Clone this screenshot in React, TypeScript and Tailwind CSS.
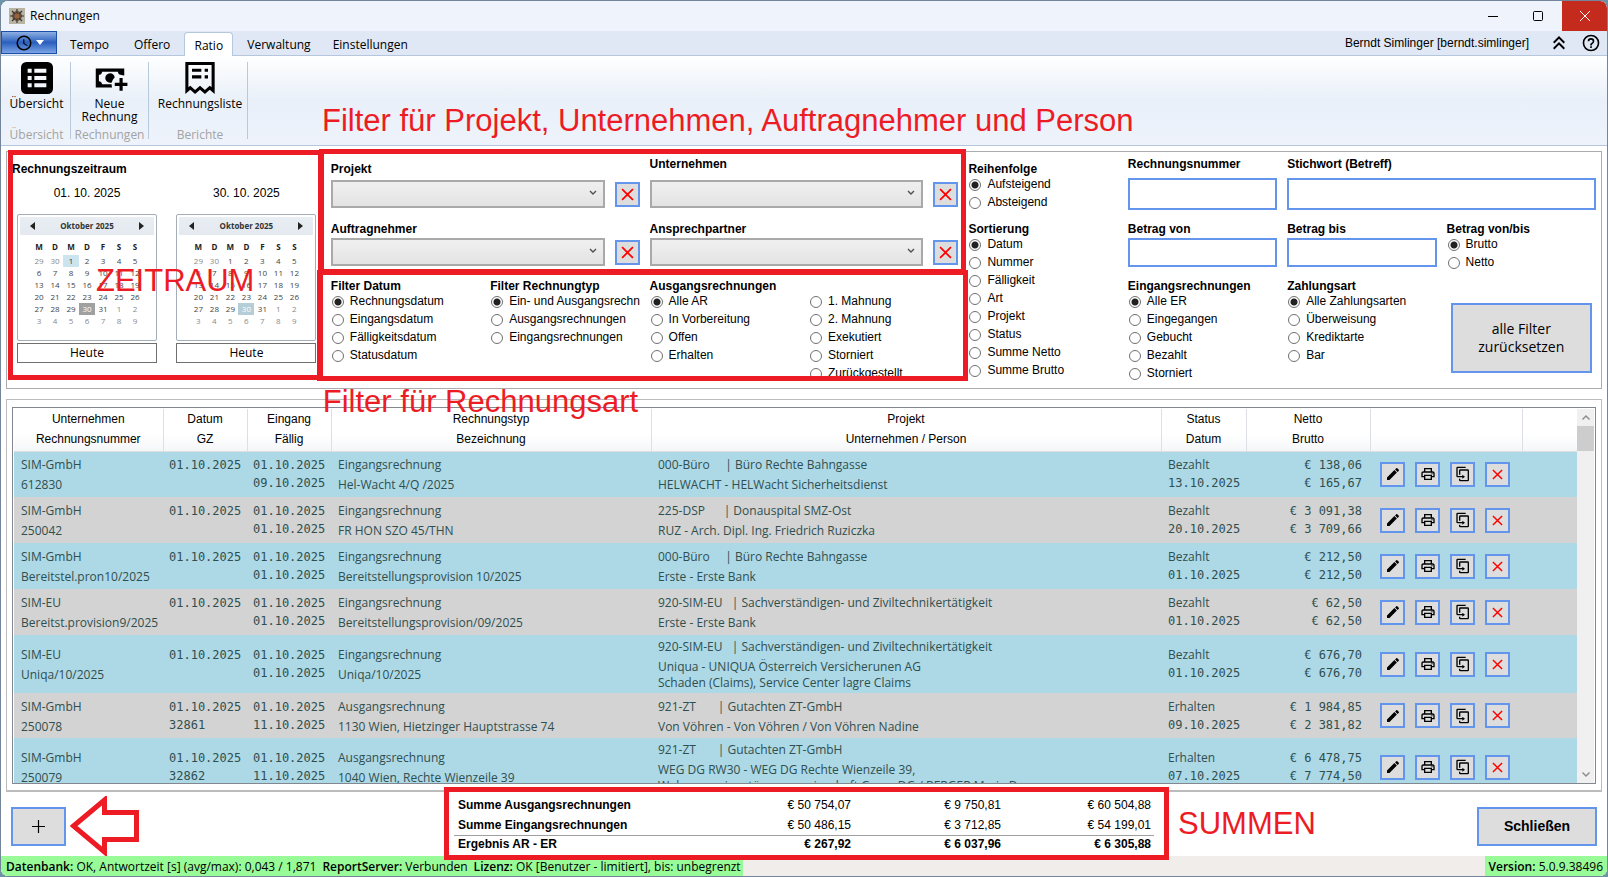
import { useId } from "react";
import type { ReactNode } from "react";

const icons = {
  clock:
    "M12 20A8 8 0 0 0 20 12A8 8 0 0 0 12 4A8 8 0 0 0 4 12A8 8 0 0 0 12 20M12 2A10 10 0 0 1 22 12A10 10 0 0 1 12 22C6.47 22 2 17.5 2 12A10 10 0 0 1 12 2M12.5 7V12.25L17 14.92L16.25 16.15L11 13V7H12.5Z",
  chevronsUp:
    "M7.41,18.41L6,17L12,11L18,17L16.59,18.41L12,13.83L7.41,18.41M7.41,12.41L6,11L12,5L18,11L16.59,12.41L12,7.83L7.41,12.41Z",
  help: "M11,18H13V16H11V18M12,2A10,10 0 0,0 2,12A10,10 0 0,0 12,22A10,10 0 0,0 22,12A10,10 0 0,0 12,2M12,20C7.59,20 4,16.41 4,12C4,7.59 7.59,4 12,4C16.41,4 20,7.59 20,12C20,16.41 16.41,20 12,20M12,6A4,4 0 0,0 8,10H10A2,2 0 0,1 12,8A2,2 0 0,1 14,10C14,12 11,11.75 11,15H13C13,12.75 16,12.5 16,10A4,4 0 0,0 12,6Z",
  list: "M4 0H20A4 4 0 0 1 24 4V20A4 4 0 0 1 20 24H4A4 4 0 0 1 0 20V4A4 4 0 0 1 4 0M5 5V8H8V5H5M10 5V8H19V5H10M5 10.5V13.5H8V10.5H5M10 10.5V13.5H19V10.5H10M5 16V19H8V16H5M10 16V19H19V16H10Z",
  cashPlus:
    "M15 15V17H18V20H20V17H23V15H20V12H18V15M14.97 11.61C14.85 10.28 13.59 8.97 12 9C10.3 9.03 9 10.3 9 12C9 13.7 10.3 14.94 12 15C12.38 15 12.77 14.92 13.14 14.77C13.41 13.67 13.86 12.63 14.97 11.61M13 16H7C7 14.9 6.1 14 5 14V10C6.1 10 7 9.1 7 8H17C17 9.1 17.9 10 19 10V10.06C19.67 10.06 20.34 10.18 21 10.4V6H3V18H13.32C13.1 17.33 13 16.66 13 16Z",
  receipt:
    "M1 0H23V24L19.3 20.8L15.7 24L12 20.8L8.3 24L4.7 20.8L1 24V0M3.3 2.3V19L4.7 17.8L8.3 21L12 17.8L15.7 21L19.3 17.8L20.7 19V2.3H3.3M6 5H13V7.3H6V5M15.5 5H18V7.3H15.5V5M6 10H13V12.3H6V10M15.5 10H18V12.3H15.5V10Z",
  pencil:
    "M20.71,7.04C21.1,6.65 21.1,6 20.71,5.63L18.37,3.29C18,2.9 17.35,2.9 16.96,3.29L15.12,5.12L18.87,8.87M3,17.25V21H6.75L17.81,9.93L14.06,6.18L3,17.25Z",
  printer:
    "M19 8C20.66 8 22 9.34 22 11V17H18V21H6V17H2V11C2 9.34 3.34 8 5 8H6V3H18V8H19M8 5V8H16V5H8M16 19V15H8V19H16M18 15H20V11C20 10.45 19.55 10 19 10H5C4.45 10 4 10.45 4 11V15H6V13H18V15M19 11.5C19 12.05 18.55 12.5 18 12.5C17.45 12.5 17 12.05 17 11.5C17 10.95 17.45 10.5 18 10.5C18.55 10.5 19 10.95 19 11.5Z",
  duplicate:
    "M11,17H4A2,2 0 0,1 2,15V3A2,2 0 0,1 4,1H16V3H4V15H11V13L15,16L11,19V17M19,21V7H8V13H6V7A2,2 0 0,1 8,5H19A2,2 0 0,1 21,7V21A2,2 0 0,1 19,23H8A2,2 0 0,1 6,21V19H8V21H19Z",
};

function Icon({ name, className }: { name: keyof typeof icons; className: string }) {
  return (
    <svg viewBox="0 0 24 24" className={className} fill="currentColor" fillRule="evenodd" aria-hidden="true">
      <path d={icons[name]} />
    </svg>
  );
}

function Cross({ className }: { className: string }) {
  return (
    <svg viewBox="0 0 12 12" className={className} fill="none" stroke="currentColor" aria-hidden="true">
      <path d="M1 1L11 11M11 1L1 11" strokeWidth="1.6" />
    </svg>
  );
}

function IconButton({ label, children }: { label: string; children: ReactNode }) {
  return (
    <button
      type="button"
      aria-label={label}
      className="flex h-[25px] w-[25px] shrink-0 items-center justify-center border-2 border-[#6495ed] bg-[#dddddd] text-black"
    >
      {children}
    </button>
  );
}

function RadioList({ title, options, selected = 0 }: { title?: string; options: string[]; selected?: number }) {
  const name = useId();
  return (
    <fieldset className="min-w-0 overflow-hidden whitespace-nowrap">
      <legend className="h-4 font-bold leading-[18px]">{title}</legend>
      {options.map((option, i) => (
        <label key={option} className="flex h-[18px] items-center gap-[6px]">
          <input
            type="radio"
            name={name}
            defaultChecked={i === selected}
            className="ml-px h-3 w-3 shrink-0 appearance-none rounded-full border border-[#707070] bg-white checked:bg-[radial-gradient(circle,#212121_0_3px,transparent_4px)]"
          />
          <span className="pb-[2px] leading-4">{option}</span>
        </label>
      ))}
    </fieldset>
  );
}

function ComboField({ label, rowClass }: { label: string; rowClass: string }) {
  const id = useId();
  return (
    <>
      <label htmlFor={id} className="block h-4 font-bold leading-[18px]">
        {label}
      </label>
      <div className={`flex items-center gap-[10px] ${rowClass}`}>
        <div className="relative min-w-0 flex-1">
          <select
            id={id}
            className="block h-7 w-full appearance-none border-2 border-[#a9a9a9] bg-linear-to-b from-[#f0f0f0] to-[#e3e3e3]"
          >
            <option value=""></option>
          </select>
          <svg viewBox="0 0 8 6" className="pointer-events-none absolute top-[10px] right-2 h-[6px] w-2" fill="none" stroke="#505050" aria-hidden="true">
            <path d="M1 1L4 4L7 1" strokeWidth="1.4" />
          </svg>
        </div>
        <IconButton label={`${label} löschen`}>
          <Cross className="h-[13px] w-[13px] text-[#ff0000]" />
        </IconButton>
      </div>
    </>
  );
}

function TextField({ label, className, inputClass }: { label: string; className: string; inputClass: string }) {
  const id = useId();
  return (
    <div className={className}>
      <label htmlFor={id} className="block h-4 font-bold leading-[18px]">
        {label}
      </label>
      <input id={id} type="text" className={`block w-full border-2 border-[#6495ed] bg-white px-1 ${inputClass}`} />
    </div>
  );
}

const weekdays = ["M", "D", "M", "D", "F", "S", "S"];
const weeks = [
  [29, 30, 1, 2, 3, 4, 5],
  [6, 7, 8, 9, 10, 11, 12],
  [13, 14, 15, 16, 17, 18, 19],
  [20, 21, 22, 23, 24, 25, 26],
  [27, 28, 29, 30, 31, 1, 2],
  [3, 4, 5, 6, 7, 8, 9],
];

function dayClass(week: number, day: number, from: boolean) {
  if (from && week === 0 && day === 1) return "bg-[#cbe4ee] text-[#333333]";
  if (week === 4 && day === 30) return from ? "bg-[#a0a0a0] text-white" : "bg-[#b4cdd6] text-white";
  if ((week === 0 && day > 20) || (week > 3 && day < 20)) return "text-[#8a8a8a]";
  return "text-[#444444]";
}

function Calendar({ date, from = false }: { date: string; from?: boolean }) {
  return (
    <div className="ml-[5px] w-[140px]">
      <p className="text-center leading-4">{date}</p>
      <div className="mt-[13px] h-[127px] rounded-xs border border-[#a3aeb9] p-[2px] font-['Open_Sans','Noto_Sans',sans-serif] text-[8px] leading-3">
        <div className="flex h-[18px] items-center justify-between bg-linear-to-b from-[#e9eef3] to-[#e3e9ef] px-[10px]">
          <button type="button" aria-label="Vorheriger Monat">
            <svg viewBox="0 0 5 8" className="h-2 w-[5px]" fill="#222222">
              <path d="M5 0V8L0 4Z" />
            </svg>
          </button>
          <span className="font-bold text-[#333333]">Oktober 2025</span>
          <button type="button" aria-label="Nächster Monat">
            <svg viewBox="0 0 5 8" className="h-2 w-[5px]" fill="#222222">
              <path d="M0 0V8L5 4Z" />
            </svg>
          </button>
        </div>
        <table className="mx-auto mt-[6px] table-fixed text-center">
          <thead>
            <tr>
              {weekdays.map((day, i) => (
                <th key={i} className="h-[14px] w-4 pb-[2px] font-bold text-[#222222]">
                  {day}
                </th>
              ))}
            </tr>
          </thead>
          <tbody>
            {weeks.map((week, w) => (
              <tr key={w}>
                {week.map((day) => (
                  <td key={day} className={`h-3 p-0 ${dayClass(w, day, from)}`}>
                    {day}
                  </td>
                ))}
              </tr>
            ))}
          </tbody>
        </table>
      </div>
      <button
        type="button"
        className="mt-[2px] block h-5 w-full border border-[#707070] bg-white font-['Open_Sans','Noto_Sans',sans-serif] leading-4"
      >
        Heute
      </button>
    </div>
  );
}

function RibbonGroup({ title, label, icon, className }: { title: string; label: string; icon: ReactNode; className: string }) {
  return (
    <div className={`my-[6px] flex flex-col items-center justify-between border-r border-[#b8c9dc] ${className}`}>
      <button type="button" className="flex flex-col items-center text-center leading-[13px]">
        <span className="flex h-8 items-center justify-center">{icon}</span>
        <span className="mt-[3px]">{label}</span>
      </button>
      <span className="leading-2 text-[#a3a3a3]">{title}</span>
    </div>
  );
}

const tabClass = "flex h-6 items-center pt-1";

const rows = [
  { company: "SIM-GmbH", number: "612830", date: "01.10.2025", gz: "", received: "01.10.2025", due: "09.10.2025", type: "Eingangsrechnung", subject: "Hel-Wacht 4/Q /2025", project: "000-Büro     | Büro Rechte Bahngasse", partner: "HELWACHT - HELWacht Sicherheitsdienst", status: "Bezahlt", statusDate: "13.10.2025", net: "€ 138,06", gross: "€ 165,67", height: "h-[46px]" },
  { company: "SIM-GmbH", number: "250042", date: "01.10.2025", gz: "", received: "01.10.2025", due: "01.10.2025", type: "Eingangsrechnung", subject: "FR HON SZO 45/THN", project: "225-DSP      | Donauspital SMZ-Ost", partner: "RUZ - Arch. Dipl. Ing. Friedrich Ruziczka", status: "Bezahlt", statusDate: "20.10.2025", net: "€ 3 091,38", gross: "€ 3 709,66", height: "h-[46px]" },
  { company: "SIM-GmbH", number: "Bereitstel.pron10/2025", date: "01.10.2025", gz: "", received: "01.10.2025", due: "01.10.2025", type: "Eingangsrechnung", subject: "Bereitstellungsprovision 10/2025", project: "000-Büro     | Büro Rechte Bahngasse", partner: "Erste - Erste Bank", status: "Bezahlt", statusDate: "01.10.2025", net: "€ 212,50", gross: "€ 212,50", height: "h-[46px]" },
  { company: "SIM-EU", number: "Bereitst.provision9/2025", date: "01.10.2025", gz: "", received: "01.10.2025", due: "01.10.2025", type: "Eingangsrechnung", subject: "Bereitstellungsprovision/09/2025", project: "920-SIM-EU   | Sachverständigen- und Ziviltechnikertätigkeit", partner: "Erste - Erste Bank", status: "Bezahlt", statusDate: "01.10.2025", net: "€ 62,50", gross: "€ 62,50", height: "h-[46px]" },
  { company: "SIM-EU", number: "Uniqa/10/2025", date: "01.10.2025", gz: "", received: "01.10.2025", due: "01.10.2025", type: "Eingangsrechnung", subject: "Uniqa/10/2025", project: "920-SIM-EU   | Sachverständigen- und Ziviltechnikertätigkeit", partner: "Uniqua - UNIQUA Österreich Versicherunen AG\nSchaden (Claims), Service Center lagre Claims", status: "Bezahlt", statusDate: "01.10.2025", net: "€ 676,70", gross: "€ 676,70", height: "h-[58px]" },
  { company: "SIM-GmbH", number: "250078", date: "01.10.2025", gz: "32861", received: "01.10.2025", due: "11.10.2025", type: "Ausgangsrechnung", subject: "1130 Wien, Hietzinger Hauptstrasse 74", project: "921-ZT       | Gutachten ZT-GmbH", partner: "Von Vöhren - Von Vöhren / Von Vöhren Nadine", status: "Erhalten", statusDate: "09.10.2025", net: "€ 1 984,85", gross: "€ 2 381,82", height: "h-[45px]" },
  { company: "SIM-GmbH", number: "250079", date: "01.10.2025", gz: "32862", received: "01.10.2025", due: "11.10.2025", type: "Ausgangsrechnung", subject: "1040 Wien, Rechte Wienzeile 39", project: "921-ZT       | Gutachten ZT-GmbH", partner: "WEG DG RW30 - WEG DG Rechte Wienzeile 39,\nWohnungseigentümergemeinschaft Gasse DG / BERGER Maria D", status: "Erhalten", statusDate: "07.10.2025", net: "€ 6 478,75", gross: "€ 7 774,50", height: "h-[58px]" },
];

const columns = [
  ["Unternehmen", "Rechnungsnummer", "w-[149px]"],
  ["Datum", "GZ", "w-[84px]"],
  ["Eingang", "Fällig", "w-[84px]"],
  ["Rechnungstyp", "Bezeichnung", "w-[320px]"],
  ["Projekt", "Unternehmen / Person", ""],
  ["Status", "Datum", "w-[85px]"],
  ["Netto", "Brutto", "w-[124px]"],
  ["", "", "w-[152px]"],
  ["", "", "w-[55px]"],
];

function TextCell({ first, second }: { first: string; second: string }) {
  return (
    <td className="overflow-hidden py-0 pr-0 pl-[7px] align-middle font-['Open_Sans','Noto_Sans',sans-serif] font-medium whitespace-pre">
      <div className="leading-5">{first}</div>
      <div className="pt-[2px] leading-4">{second}</div>
    </td>
  );
}

const monoClass = "p-0 align-middle font-['DejaVu_Sans_Mono',monospace] leading-[18px]";

function InvoiceTable() {
  return (
    <table className="w-full table-fixed text-[12px]">
      <thead>
        <tr>
          {columns.map(([top, bottom, width], i) => (
            <th
              key={i}
              className={`h-[42px] border-r border-b border-[#dcdfe3] bg-linear-to-b from-white from-60% to-[#f5f6f8] p-0 align-top font-normal leading-5 last:border-r-0 ${width}`}
            >
              {top}
              <br />
              {bottom}
            </th>
          ))}
        </tr>
      </thead>
      <tbody className="text-[#2f4f4f]">
        {rows.map((row, i) => (
          <tr key={row.number} className={`${row.height} ${i % 2 ? "bg-[#d3d3d3]" : "bg-[#add8e6]"}`}>
            <TextCell first={row.company} second={row.number} />
            <td className={`${monoClass} pl-[6px]`}>
              {row.date}
              <br />
              {row.gz || "\u00a0"}
            </td>
            <td className={`${monoClass} pl-[6px]`}>
              {row.received}
              <br />
              {row.due}
            </td>
            <TextCell first={row.type} second={row.subject} />
            <TextCell first={row.project} second={row.partner} />
            <td className={`${monoClass} pl-[7px]`}>
              <span className="font-['Open_Sans','Noto_Sans',sans-serif] font-medium">{row.status}</span>
              <br />
              {row.statusDate}
            </td>
            <td className={`${monoClass} pr-2 text-right`}>
              {row.net}
              <br />
              {row.gross}
            </td>
            <td className="p-0 align-middle">
              <div className="flex gap-[10px] pl-[10px]">
                <IconButton label="Bearbeiten">
                  <Icon name="pencil" className="h-4 w-4" />
                </IconButton>
                <IconButton label="Drucken">
                  <Icon name="printer" className="h-4 w-4" />
                </IconButton>
                <IconButton label="Duplizieren">
                  <Icon name="duplicate" className="h-4 w-4" />
                </IconButton>
                <IconButton label="Löschen">
                  <Cross className="h-[11px] w-[11px] text-[#ff0000]" />
                </IconButton>
              </div>
            </td>
            <td></td>
          </tr>
        ))}
      </tbody>
    </table>
  );
}

// red marker text of the manual
const noteClass = "whitespace-nowrap text-[31px] leading-9 text-[#ed1c24]";

export default function App() {
  return (
    <div className="h-screen min-h-[700px] overflow-hidden bg-[#6d93a8] font-['Liberation_Sans',Arial,sans-serif] text-[12px] text-black">
      <div className="flex h-full flex-col overflow-hidden rounded-lg border border-[#74859b] bg-white">
        <header className="flex h-[30px] shrink-0 items-center bg-[#eff3fb] font-['Open_Sans','Noto_Sans',sans-serif]">
          <svg viewBox="0 0 16 16" className="ml-2 h-4 w-4" aria-hidden="true">
            <rect width="16" height="16" fill="#b9b3a4" />
            <circle cx="8" cy="8" r="5" fill="#6b5a48" />
            <path d="M8 1V15M1 8H15M3 3L13 13M13 3L3 13" stroke="#3c342c" strokeWidth="1.2" />
            <circle cx="8" cy="8" r="2.6" fill="#9a6238" />
          </svg>
          <h1 className="ml-[5px] flex-1">Rechnungen</h1>
          <button type="button" aria-label="Minimieren" className="flex h-full w-[45px] items-center justify-center">
            <svg viewBox="0 0 10 10" className="h-[10px] w-[10px]" stroke="#000000">
              <path d="M0 5.5H10" />
            </svg>
          </button>
          <button type="button" aria-label="Maximieren" className="mr-[2px] flex h-full w-[45px] items-center justify-center">
            <svg viewBox="0 0 10 10" className="h-[10px] w-[10px]" fill="none" stroke="#000000">
              <rect x="0.5" y="0.5" width="9" height="9" rx="1" />
            </svg>
          </button>
          <button type="button" aria-label="Fenster schließen" className="flex h-full w-[45px] items-center justify-center bg-[#c42b1c] text-white">
            <svg viewBox="0 0 10 10" className="h-[10px] w-[10px]" stroke="currentColor">
              <path d="M0 0L10 10M10 0L0 10" />
            </svg>
          </button>
        </header>

        <nav className="flex h-[25px] shrink-0 items-end border-b border-[#b5c7dc] bg-[#dfe8f4] font-['Open_Sans','Noto_Sans',sans-serif]">
          <button
            type="button"
            aria-label="Anwendungsmenü"
            className="flex h-[23px] w-14 items-center justify-center gap-[3px] self-start border border-[#1c4fa8] bg-linear-to-b from-[#8eb0e3] via-[#2a5fbd] via-50% to-[#7aa4e4]"
          >
            <Icon name="clock" className="h-[18px] w-[18px]" />
            <svg viewBox="0 0 8 5" className="h-[5px] w-2" fill="#ffffff">
              <path d="M0 0H8L4 5Z" />
            </svg>
          </button>
          <a href="#tempo" className={`${tabClass} ml-[13px]`}>Tempo</a>
          <a href="#offero" className={`${tabClass} ml-[25px]`}>Offero</a>
          <a href="#ratio" aria-current="page" className="ml-[14px] -mb-px flex h-6 w-[49px] items-center justify-center rounded-t-sm border border-b-0 border-[#b5c7dc] bg-white pt-[2px]">
            Ratio
          </a>
          <a href="#verwaltung" className={`${tabClass} ml-[14px]`}>Verwaltung</a>
          <a href="#einstellungen" className={`${tabClass} ml-[22px]`}>Einstellungen</a>
          <div className="ml-auto flex items-center self-stretch font-['Liberation_Sans',Arial,sans-serif]">
            <span>Berndt Simlinger [berndt.simlinger]</span>
            <button type="button" aria-label="Menüband einklappen" className="ml-[18px]">
              <Icon name="chevronsUp" className="h-6 w-6" />
            </button>
            <button type="button" aria-label="Hilfe" className="mr-[6px] ml-[10px]">
              <Icon name="help" className="h-5 w-5" />
            </button>
          </div>
        </nav>

        <section className="relative flex h-[90px] shrink-0 border-b border-[#b5c7dc] bg-linear-to-b from-white via-[#e9f0f9] via-50% to-[#eef3fb] font-['Open_Sans','Noto_Sans',sans-serif]">
          <RibbonGroup className="w-[70px] pl-[2px]" title="Übersicht" label="Übersicht" icon={<Icon name="list" className="h-8 w-8" />} />
          <RibbonGroup className="w-[78px] px-2" title="Rechnungen" label="Neue Rechnung" icon={<Icon name="cashPlus" className="h-[38px] w-[38px]" />} />
          <RibbonGroup className="w-[99px] pl-1" title="Berichte" label="Rechnungsliste" icon={<Icon name="receipt" className="h-8 w-8" />} />
          <p className="pointer-events-none absolute top-[47px] left-[321px] font-['Liberation_Sans',Arial,sans-serif]">
            <span className={noteClass}>Filter für Projekt, Unternehmen, Auftragnehmer und Person</span>
          </p>
        </section>

        <main className="flex min-h-0 flex-1 flex-col px-[5px] pt-[5px]">
          <section className="grid h-[238px] shrink-0 grid-cols-10 grid-rows-[68px_57px_111px] gap-x-[10px] border border-[#acacac] px-[5px]">
            <div className="relative col-span-2 row-span-3 pt-2">
              <h2 className="h-4 font-bold leading-[18px]">Rechnungszeitraum</h2>
              <div className="mt-[9px] grid grid-cols-2 gap-[10px]">
                <Calendar date="01. 10. 2025" from />
                <Calendar date="30. 10. 2025" />
              </div>
              <div className="pointer-events-none absolute -top-[2px] -right-[2px] bottom-2 -left-1 border-[5px] border-[#ed1c24]"></div>
              <p className={`pointer-events-none absolute top-[111px] left-[84px] ${noteClass}`}>ZEITRAUM</p>
            </div>

            <div className="col-span-2 col-start-3 row-start-1 pt-2">
              <ComboField label="Projekt" rowClass="mt-1" />
            </div>
            <div className="col-span-2 col-start-5 row-start-1 pt-[3px]">
              <ComboField label="Unternehmen" rowClass="mt-[9px]" />
            </div>
            <div className="col-span-2 col-start-3 row-start-2">
              <ComboField label="Auftragnehmer" rowClass="mt-[2px]" />
            </div>
            <div className="col-span-2 col-start-5 row-start-2">
              <ComboField label="Ansprechpartner" rowClass="mt-[2px]" />
            </div>
            <div className="pointer-events-none relative col-span-4 col-start-3 row-span-2 row-start-1">
              <div className="absolute -top-[3px] -right-2 bottom-[3px] -left-3 border-[5px] border-[#ed1c24]"></div>
            </div>

            <div className="col-start-3 row-start-3">
              <RadioList title="Filter Datum" options={["Rechnungsdatum", "Eingangsdatum", "Fälligkeitsdatum", "Statusdatum"]} />
            </div>
            <div className="col-start-4 row-start-3">
              <RadioList title="Filter Rechnungtyp" options={["Ein- und Ausgangsrechnungen", "Ausgangsrechnungen", "Eingangsrechnungen"]} />
            </div>
            <div className="col-start-5 row-start-3">
              <RadioList title="Ausgangsrechnungen" options={["Alle AR", "In Vorbereitung", "Offen", "Erhalten"]} />
            </div>
            <div className="col-start-6 row-start-3 h-[99px] overflow-hidden">
              <RadioList title={"\u00a0"} selected={-1} options={["1. Mahnung", "2. Mahnung", "Exekutiert", "Storniert", "Zurückgestellt"]} />
            </div>
            <div className="pointer-events-none relative z-10 col-span-4 col-start-3 row-start-3">
              <div className="absolute -top-[7px] -right-[10px] bottom-[7px] -left-[14px] border-[5px] border-[#ed1c24]"></div>
              <p className={`absolute top-[107px] -left-[8px] ${noteClass}`}>Filter für Rechnungsart</p>
            </div>

            <div className="col-start-7 row-start-1 pt-2">
              <RadioList title="Reihenfolge" options={["Aufsteigend", "Absteigend"]} />
            </div>
            <div className="col-start-7 row-span-2 row-start-2">
              <RadioList
                title="Sortierung"
                options={["Datum", "Nummer", "Fälligkeit", "Art", "Projekt", "Status", "Summe Netto", "Summe Brutto"]}
              />
            </div>

            <TextField label="Rechnungsnummer" className="col-start-8 row-start-1 pt-[3px]" inputClass="mt-[7px] h-8" />
            <TextField label="Stichwort (Betreff)" className="col-span-2 col-start-9 row-start-1 pt-[3px]" inputClass="mt-[7px] h-8" />
            <TextField label="Betrag von" className="col-start-8 row-start-2" inputClass="mt-[2px] h-[29px]" />
            <TextField label="Betrag bis" className="col-start-9 row-start-2" inputClass="mt-[2px] h-[29px]" />
            <div className="col-start-10 row-start-2">
              <RadioList title="Betrag von/bis" options={["Brutto", "Netto"]} />
            </div>
            <div className="col-start-8 row-start-3">
              <RadioList title="Eingangsrechnungen" options={["Alle ER", "Eingegangen", "Gebucht", "Bezahlt", "Storniert"]} />
            </div>
            <div className="col-start-9 row-start-3">
              <RadioList title="Zahlungsart" options={["Alle Zahlungsarten", "Überweisung", "Krediktarte", "Bar"]} />
            </div>
            <div className="col-start-10 row-start-3 px-1 pt-[26px]">
              <button
                type="button"
                className="h-[70px] w-full border-2 border-[#6495ed] bg-[#dddddd] px-4 font-['Open_Sans','Noto_Sans',sans-serif] text-[14px] leading-[18px]"
              >
                alle Filter zurücksetzen
              </button>
            </div>
          </section>

          <section className="mt-[10px] flex min-h-0 flex-1 border border-b-2 border-[#bcbcbc] px-[5px] pt-[7px] pb-[6px]">
            <div className="flex min-w-0 flex-1 overflow-hidden border border-[#828790] px-px pt-px">
              <div className="min-w-0 flex-1">
                <InvoiceTable />
              </div>
              <div className="flex w-[17px] shrink-0 flex-col items-center bg-[#f0f0f0]">
                <svg viewBox="0 0 8 5" className="my-[6px] h-[5px] w-2" fill="none" stroke="#8a8a8a">
                  <path d="M0.5 4.5L4 1L7.5 4.5" strokeWidth="1.4" />
                </svg>
                <div className="h-[25px] w-full bg-[#cdcdcd]"></div>
                <svg viewBox="0 0 8 5" className="mt-auto mb-[6px] h-[5px] w-2" fill="none" stroke="#8a8a8a">
                  <path d="M0.5 0.5L4 4L7.5 0.5" strokeWidth="1.4" />
                </svg>
              </div>
            </div>
          </section>
        </main>

        <footer className="grid h-16 shrink-0 grid-cols-[1fr_700px_1fr]">
          <div className="flex items-start gap-1 pl-[10px]">
            <button type="button" aria-label="Neue Rechnung" className="mt-[15px] flex h-[39px] w-[55px] items-center justify-center border-2 border-[#6495ed] bg-[#dddddd]">
              <svg viewBox="0 0 13 13" className="h-[13px] w-[13px]" stroke="#000000">
                <path d="M6.5 0V13M0 6.5H13" strokeWidth="1.2" />
              </svg>
            </button>
            <svg viewBox="0 0 70 60" className="mt-1 h-[60px] w-[70px]" fill="none" stroke="#ed1c24" strokeWidth="5" aria-hidden="true">
              <path d="M3.5 30L34.5 4V16.5H66.5V43.5H34.5V56Z" />
            </svg>
          </div>

          <div className="relative h-16 pt-[3px]">
            <table className="w-full table-fixed text-right leading-4">
              <tbody>
                <tr className="h-5">
                  <th scope="row" className="w-[248px] p-0 pl-1 text-left font-bold">Summe Ausgangsrechnungen</th>
                  <td className="w-[149px] p-0">€ 50 754,07</td>
                  <td className="w-[150px] p-0">€ 9 750,81</td>
                  <td className="p-0 pr-[3px]">€ 60 504,88</td>
                </tr>
                <tr className="h-5 border-b border-[#a0a0a0]">
                  <th scope="row" className="p-0 pl-1 text-left font-bold">Summe Eingangsrechnungen</th>
                  <td className="p-0">€ 50 486,15</td>
                  <td className="p-0">€ 3 712,85</td>
                  <td className="p-0 pr-[3px]">€ 54 199,01</td>
                </tr>
                <tr className="h-[18px] font-bold">
                  <th scope="row" className="p-0 pl-1 text-left">Ergebnis AR - ER</th>
                  <td className="p-0">€ 267,92</td>
                  <td className="p-0">€ 6 037,96</td>
                  <td className="p-0 pr-[3px]">€ 6 305,88</td>
                </tr>
              </tbody>
            </table>
            <div className="pointer-events-none absolute -top-[5px] -right-[15px] -bottom-1 -left-[10px] border-[5px] border-[#ed1c24]"></div>
          </div>

          <div className="flex items-start justify-between pr-[10px] pl-6">
            <p className={`mt-[14px] ${noteClass}`}>SUMMEN</p>
            <button type="button" className="mt-[15px] h-[39px] w-[120px] border-2 border-[#6495ed] bg-[#dddddd] text-[14px] font-bold">
              Schließen
            </button>
          </div>
        </footer>

        <div className="flex h-5 shrink-0 justify-between bg-[#f0edeb] font-['Open_Sans','Noto_Sans',sans-serif] leading-[22px] whitespace-nowrap">
          <div className="flex gap-[6px] bg-[#98fb98] pr-[2px] pl-[5px]">
            <span>
              <b className="font-semibold">Datenbank:</b> OK, Antwortzeit [s] (avg/max): 0,043 / 1,871
            </span>
            <span>
              <b className="font-semibold">ReportServer:</b> Verbunden
            </span>
            <span>
              <b className="font-semibold">Lizenz:</b> OK [Benutzer - limitiert], bis: unbegrenzt
            </span>
          </div>
          <div className="bg-[#98fb98] px-1">
            <b className="font-semibold">Version:</b> 5.0.9.38496
          </div>
        </div>
      </div>
    </div>
  );
}
